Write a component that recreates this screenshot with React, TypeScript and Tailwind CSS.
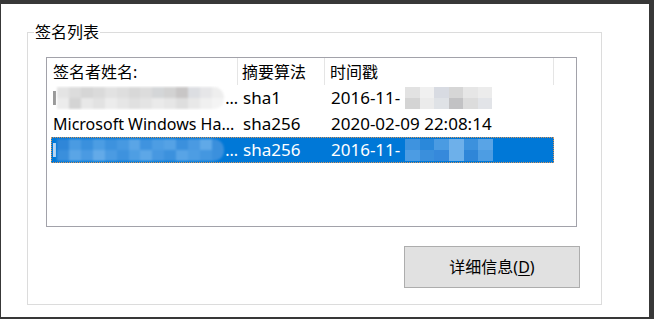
const font = { fontFamily: '"Noto Sans", "Noto Sans CJK SC", sans-serif' };

const grayBlocks = [
  ["#e4e4e4", "#dcdcdc", "#d6d6d6", "#dadada", "#e2e2e2", "#dedede", "#d8d8d8", "#dcdcdc", "#d4d6d8", "#d2d2d2", "#c8c6c6", "#dcdee2", "#e6e6e8", "#eeeeee"],
  ["#ececec", "#d4d4d4", "#e8e8e8", "#e2e2e2", "#ececec", "#e6e6e6", "#e0e0e0", "#e4e4e4", "#eaeaea", "#e6e6e6", "#dedede", "#e8e8e8", "#f0f0f0", "#f4f4f4"],
];

const blueBlocks = [
  ["#2f86d8", "#4a9be2", "#3a90dd", "#4c9de3", "#3d92de", "#4799e1", "#5aa5e6", "#3f93df", "#4d9de3", "#55a2e5", "#3b90dd", "#4a9ae2", "#60a9e8", "#3a8fdc"],
  ["#3a8fdc", "#5aa5e6", "#4a9ae2", "#63aae8", "#4b9be2", "#3e92de", "#4e9ee3", "#5da7e7", "#4798e1", "#3c91dd", "#58a4e6", "#4d9de3", "#4497e0", "#3b90dd"],
];

const timeGray = [
  ["#e2e2e2", "#f0f0f0", "#d8dbe2", "#d6d6d6", "#e6e6e6", "#ececec"],
  ["#d4d4d4", "#ebebeb", "#dfe2e6", "#c2c2c4", "#dcdcdc", "#e2e4e8"],
];

const timeBlue = [
  ["#3e93df", "#2a88da", "#4a9be2", "#6eb0ea", "#3c91dd", "#59a4e6"],
  ["#4c9ce3", "#3a8fdc", "#3689db", "#6db0ea", "#2f86d8", "#4d9de3"],
];

function Mosaic({ blocks, width, blur }: { blocks: string[][]; width: number; blur?: boolean }) {
  return (
    <div
      className={`flex flex-col overflow-hidden ${blur ? "blur-[1px] rounded-r-[10px]" : ""}`}
      style={{ width }}
    >
      {blocks.map((row, i) => (
        <div key={i} className="flex h-[11px]">
          {row.map((c, j) => (
            <div key={j} className="flex-1" style={{ backgroundColor: c }} />
          ))}
        </div>
      ))}
    </div>
  );
}

function Row({
  selected,
  name,
  algo,
  time,
}: {
  selected?: boolean;
  name: React.ReactNode;
  algo: string;
  time: React.ReactNode;
}) {
  return (
    <div
      className={`flex h-[26px] items-center ml-[4px] w-[503px] ${
        selected ? "bg-[#0078d7] text-white border border-dotted border-[#d8955a]" : "border border-transparent text-black"
      }`}
    >
      <div className="w-[186px] pl-[1px] whitespace-nowrap overflow-hidden text-[16px]">{name}</div>
      <div className="w-[88px] pl-[5px] whitespace-nowrap text-[17px]">{algo}</div>
      <div className="flex-1 pl-[5px] whitespace-nowrap text-[17px]">{time}</div>
    </div>
  );
}

export default function App() {
  return (
    <div className="w-[654px] h-[319px] bg-[#383838] flex pt-[4px] pl-[1px] pr-[5px] pb-[2px]" style={font}>
      <div className="flex-1 bg-white text-[16px] text-black">
        {/* 签名列表 group box */}
        <div className="relative ml-[26px] mt-[28px] w-[575px] h-[273px] border border-[#dcdcdc] flex flex-col">
          <div className="absolute left-[6px] top-[-12px] bg-white px-[1px] leading-[22px]">签名列表</div>

          <div className="ml-[18px] mt-[24px] w-[531px] h-[170px] border border-[#a2a2aa] flex flex-col">
            <div className="flex h-[27px] items-center leading-none">
              <div className="w-[191px] h-full flex items-center pl-[6px] border-r border-[#e5e5e5]">签名者姓名:</div>
              <div className="w-[87px] h-full flex items-center pl-[4px] border-r border-[#e5e5e5]">摘要算法</div>
              <div className="w-[229px] h-full flex items-center pl-[5px] border-r border-[#e5e5e5]">时间戳</div>
            </div>

            <Row
              name={
                <div className="flex items-center">
                  <span className="inline-block w-[3px] h-[14px] bg-[#9a9a9a] mr-[1px]" />
                  <Mosaic blocks={grayBlocks} width={172} blur />
                  <span className="ml-[1px]">...</span>
                </div>
              }
              algo="sha1"
              time={
                <div className="flex items-center">
                  <span className="w-[74px]">2016-11-</span>
                  <Mosaic blocks={timeGray} width={87} />
                </div>
              }
            />
            <Row
              name="Microsoft Windows Ha..."
              algo="sha256"
              time="2020-02-09 22:08:14"
            />
            <Row
              selected
              name={
                <div className="flex items-center">
                  <span className="inline-block w-[3px] h-[14px] bg-[#b8d6f2] mr-[1px]" />
                  <Mosaic blocks={blueBlocks} width={172} blur />
                  <span className="ml-[1px]">...</span>
                </div>
              }
              algo="sha256"
              time={
                <div className="flex items-center">
                  <span className="w-[74px]">2016-11-</span>
                  <Mosaic blocks={timeBlue} width={88} />
                </div>
              }
            />
          </div>

          <div className="flex justify-end mt-[19px] mr-[21px]">
            <button className="w-[176px] h-[42px] bg-[#e1e1e1] border border-[#adadad] text-[16px] text-black">
              详细信息(<span className="underline underline-offset-2">D</span>)
            </button>
          </div>
        </div>
      </div>
    </div>
  );
}
